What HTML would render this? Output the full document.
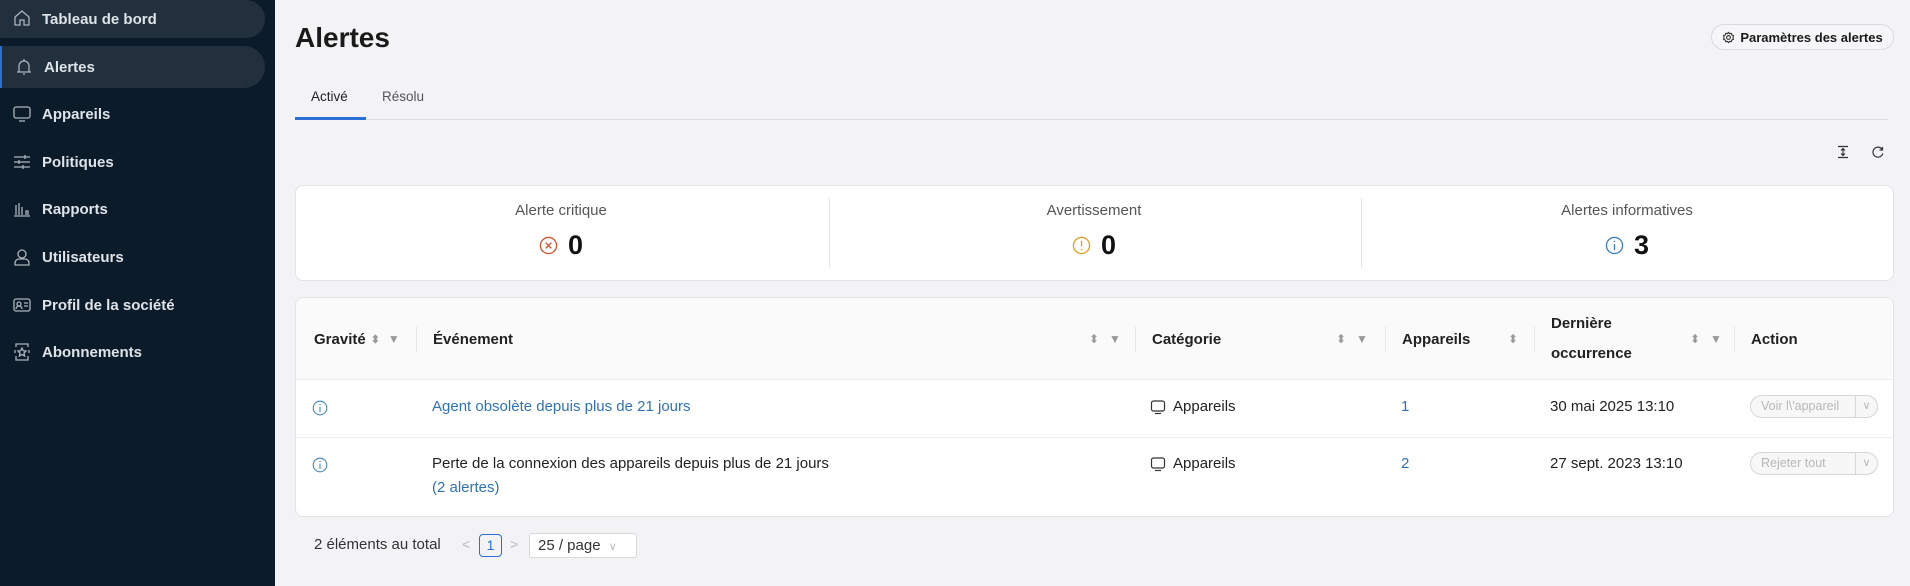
<!DOCTYPE html>
<html><head><meta charset="utf-8"><style>
*{box-sizing:border-box;margin:0;padding:0}
body{width:1910px;height:586px;overflow:hidden;background:#f3f3f6;font-family:"Liberation Sans",sans-serif;color:#1a1a1a;position:relative}
.side{position:absolute;left:0;top:0;width:275px;height:586px;background:#0c1b29}
.item{position:absolute;left:0;width:265px;height:42px;color:#dde3e8;font-weight:bold;font-size:15px;display:flex;align-items:center;padding-left:42px}
.item.sel{background:#22303d;border-radius:0 21px 21px 0}
.item svg{position:absolute;left:12px;top:11px}
.abs{position:absolute}
h1{position:absolute;left:295px;top:22px;font-size:28px;font-weight:bold;color:#1a1a1a}
.btn{position:absolute;left:1711px;top:24px;width:183px;height:26px;border:1px solid #d8dbe0;border-radius:13px;font-size:13px;font-weight:bold;display:flex;align-items:center;justify-content:center;gap:5px;background:#f6f6f8}
.card{position:absolute;background:#fff;border:1px solid #e0e2e6;border-radius:8px}
.lbl{position:absolute;font-size:15px;color:#555;text-align:center;width:530px}
.num{position:absolute;font-size:27px;font-weight:bold;color:#111;text-align:center;width:530px;display:flex;justify-content:center;align-items:center;gap:10px}
.th{position:absolute;top:0;height:82px;display:flex;align-items:center;font-size:15px;font-weight:bold;color:#222}
.sep{position:absolute;top:28px;width:1px;height:26px;background:#e8e8e8}
.td{position:absolute;font-size:15px;color:#222}
.link{color:#2f73b6}
.act{position:absolute;left:1750px;width:128px;height:23px;border:1px solid #d6d6d6;border-radius:12px;background:#f7f7f7;font-size:12.5px;color:#b8b8b8;padding-left:10px;line-height:21px}
.act span{position:absolute;right:0;top:0;width:22px;height:21px;border-left:1px solid #d6d6d6;text-align:center;font-size:11px}
</style></head><body>
<div class="side">
 <div class="item sel" style="top:0;height:38px;border-radius:0 19px 19px 0"><svg width="20" height="20" viewBox="0 0 20 20" style="top:8px" fill="none" stroke="#aab3bb" stroke-width="1.3"><path d="M3 9 L10 3 L17 9 V17 H12 V12 H8 V17 H3 Z"/></svg>Tableau de bord</div>
 <div class="item sel" style="top:46px;border-left:2px solid #2a6fd1"><svg width="20" height="20" viewBox="0 0 20 20" fill="none" stroke="#aab3bb" stroke-width="1.3"><path d="M5 15 V9 a5 5 0 0 1 10 0 V15 Z M3 15 H17 M9 17 H11 M10 2 V4"/></svg>Alertes</div>
 <div class="item" style="top:93px"><svg width="20" height="20" viewBox="0 0 20 20" fill="none" stroke="#aab3bb" stroke-width="1.3"><rect x="2" y="3" width="16" height="11" rx="2"/><path d="M7 17 H13"/></svg>Appareils</div>
 <div class="item" style="top:141px"><svg width="20" height="20" viewBox="0 0 20 20" fill="none" stroke="#aab3bb" stroke-width="1.3"><path d="M2 5H18M2 10H18M2 15H18M13 3V7M7 8V12M11 13V17"/></svg>Politiques</div>
 <div class="item" style="top:188px"><svg width="20" height="20" viewBox="0 0 20 20" fill="none" stroke="#aab3bb" stroke-width="1.3"><path d="M2 17H18M4 16V6M7 16V4M10 16V8M14 16V12H16V16"/></svg>Rapports</div>
 <div class="item" style="top:236px"><svg width="20" height="20" viewBox="0 0 20 20" fill="none" stroke="#aab3bb" stroke-width="1.3"><circle cx="10" cy="7" r="4"/><path d="M3 18 V16 a4 4 0 0 1 4 -4 H13 a4 4 0 0 1 4 4 V18 Z"/></svg>Utilisateurs</div>
 <div class="item" style="top:284px"><svg width="20" height="20" viewBox="0 0 20 20" fill="none" stroke="#aab3bb" stroke-width="1.3"><rect x="2" y="4" width="16" height="12" rx="2"/><circle cx="7" cy="9" r="2"/><path d="M4 14 a3 3 0 0 1 6 0 M12 8H16M12 11H16"/></svg>Profil de la société</div>
 <div class="item" style="top:331px"><svg width="20" height="20" viewBox="0 0 20 20" fill="none" stroke="#aab3bb" stroke-width="1.3"><path d="M4 5V2H16V5M4 14V18H16V14M3 8V11M17 8V11M10 6L11.3 8.8L14 9L12 11L12.6 14L10 12.5L7.4 14L8 11L6 9L8.7 8.8Z"/></svg>Abonnements</div>
</div>

<h1>Alertes</h1>
<div class="btn"><svg width="13" height="13" viewBox="0 0 14 14" fill="none" stroke="#333" stroke-width="1.2"><circle cx="7" cy="7" r="2"/><path d="M7 1.5 L8.2 2.8 L10 2.5 L10.5 4.3 L12.3 5 L11.8 7 L12.3 9 L10.5 9.7 L10 11.5 L8.2 11.2 L7 12.5 L5.8 11.2 L4 11.5 L3.5 9.7 L1.7 9 L2.2 7 L1.7 5 L3.5 4.3 L4 2.5 L5.8 2.8 Z"/></svg>Paramètres des alertes</div>

<div class="abs" style="left:311px;top:89px;font-size:13.5px;color:#222">Activé</div>
<div class="abs" style="left:382px;top:89px;font-size:13.5px;color:#555">Résolu</div>
<div class="abs" style="left:295px;top:119px;width:1593px;height:1px;background:#dcdde1"></div>
<div class="abs" style="left:295px;top:117px;width:71px;height:3px;background:#2a6fd1"></div>

<svg class="abs" style="left:1836px;top:145px" width="14" height="14" viewBox="0 0 14 14" fill="none" stroke="#333" stroke-width="1.2"><path d="M2 1.5H12M2 12.5H12M7 3.5V10.5M5 5.5L7 3.5L9 5.5M5 8.5L7 10.5L9 8.5"/></svg>
<svg class="abs" style="left:1871px;top:145px" width="14" height="14" viewBox="0 0 14 14" fill="none" stroke="#333" stroke-width="1.2"><path d="M11.5 5 A5 5 0 1 0 11.8 8.5 M11.5 2 V5 H8.5"/></svg>

<div class="card" style="left:295px;top:185px;width:1599px;height:96px">
 <div class="abs" style="left:533px;top:12px;width:1px;height:70px;background:#e5e5e5"></div>
 <div class="abs" style="left:1065px;top:12px;width:1px;height:70px;background:#e5e5e5"></div>
 <div class="lbl" style="left:0;top:16px">Alerte critique</div>
 <div class="num" style="left:0;top:44px"><svg width="19" height="19" viewBox="0 0 20 20" fill="none" stroke="#d0532e" stroke-width="1.4"><circle cx="10" cy="10" r="8.5"/><path d="M7 7L13 13M13 7L7 13"/></svg>0</div>
 <div class="lbl" style="left:533px;top:16px">Avertissement</div>
 <div class="num" style="left:533px;top:44px"><svg width="19" height="19" viewBox="0 0 20 20" fill="none" stroke="#e0a020" stroke-width="1.4"><circle cx="10" cy="10" r="8.5"/><path d="M10 5V11M10 13.5V15"/></svg>0</div>
 <div class="lbl" style="left:1066px;top:16px">Alertes informatives</div>
 <div class="num" style="left:1066px;top:44px"><svg width="19" height="19" viewBox="0 0 20 20" fill="none" stroke="#3b80b8" stroke-width="1.4"><circle cx="10" cy="10" r="8.5"/><path d="M10 5V6.5M10 8.5V15"/></svg>3</div>
</div>

<div class="card" style="left:295px;top:297px;width:1599px;height:220px;overflow:hidden">
 <div class="abs" style="left:0;top:0;width:100%;height:82px;background:#fafafa;border-bottom:1px solid #eee"></div>
 <div class="th" style="left:18px">Gravité <span style="color:#999;font-size:11px;margin-left:5px">⬍</span><span style="color:#999;font-size:12px;margin-left:8px">▼</span></div>
 <div class="sep" style="left:120px"></div>
 <div class="th" style="left:137px">Événement</div>
 <div class="th" style="left:793px;color:#999;font-weight:normal;font-size:12px">⬍&nbsp;&nbsp;&nbsp;▼</div>
 <div class="sep" style="left:839px"></div>
 <div class="th" style="left:856px">Catégorie</div>
 <div class="th" style="left:1040px;color:#999;font-weight:normal;font-size:12px">⬍&nbsp;&nbsp;&nbsp;▼</div>
 <div class="sep" style="left:1089px"></div>
 <div class="th" style="left:1106px">Appareils</div>
 <div class="th" style="left:1212px;color:#999;font-weight:normal;font-size:12px">⬍</div>
 <div class="sep" style="left:1238px"></div>
 <div class="th" style="left:1255px;line-height:30px;width:110px">Dernière occurrence</div>
 <div class="th" style="left:1394px;color:#999;font-weight:normal;font-size:12px">⬍&nbsp;&nbsp;&nbsp;▼</div>
 <div class="sep" style="left:1438px"></div>
 <div class="th" style="left:1455px">Action</div>
 <div class="abs" style="left:0;top:139px;width:100%;height:1px;background:#eee"></div>
</div>

<svg class="abs" style="left:312px;top:400px" width="16" height="16" viewBox="0 0 20 20" fill="none" stroke="#3b80b8" stroke-width="1.3"><circle cx="10" cy="10" r="8.5"/><path d="M10 5V6.5M10 8.5V15"/></svg>
<svg class="abs" style="left:312px;top:457px" width="16" height="16" viewBox="0 0 20 20" fill="none" stroke="#3b80b8" stroke-width="1.3"><circle cx="10" cy="10" r="8.5"/><path d="M10 5V6.5M10 8.5V15"/></svg>
<div class="td link" style="left:432px;top:398px">Agent obsolète depuis plus de 21 jours</div>
<div class="td" style="left:432px;top:455px">Perte de la connexion des appareils depuis plus de 21 jours</div>
<div class="td link" style="left:432px;top:479px">(2 alertes)</div>
<svg class="abs" style="left:1150px;top:399px" width="16" height="16" viewBox="0 0 16 16" fill="none" stroke="#333" stroke-width="1.2"><rect x="1.5" y="2" width="13" height="10" rx="2"/><path d="M5 14.5H11"/></svg>
<div class="td" style="left:1173px;top:398px">Appareils</div>
<svg class="abs" style="left:1150px;top:456px" width="16" height="16" viewBox="0 0 16 16" fill="none" stroke="#333" stroke-width="1.2"><rect x="1.5" y="2" width="13" height="10" rx="2"/><path d="M5 14.5H11"/></svg>
<div class="td" style="left:1173px;top:455px">Appareils</div>
<div class="td link" style="left:1401px;top:398px">1</div>
<div class="td link" style="left:1401px;top:455px">2</div>
<div class="td" style="left:1550px;top:398px">30 mai 2025 13:10</div>
<div class="td" style="left:1550px;top:455px">27 sept. 2023 13:10</div>
<div class="act" style="top:395px">Voir l\'appareil<span>∨</span></div>
<div class="act" style="top:452px">Rejeter tout<span>∨</span></div>

<div class="abs" style="left:314px;top:536px;font-size:15px;color:#333">2 éléments au total</div>
<div class="abs" style="left:462px;top:536px;font-size:14px;color:#bbb">&lt;</div>
<div class="abs" style="left:479px;top:534px;width:23px;height:23px;border:1px solid #2a6fd1;border-radius:4px;color:#2a6fd1;font-size:14px;text-align:center;line-height:21px">1</div>
<div class="abs" style="left:510px;top:536px;font-size:14px;color:#bbb">&gt;</div>
<div class="abs" style="left:529px;top:533px;width:108px;height:25px;border:1px solid #d9d9d9;background:#fff;border-radius:3px;font-size:15px;color:#333;padding-left:8px;line-height:23px">25 / page <span style="color:#bbb;font-size:11px;margin-left:4px">∨</span></div>
</body></html>
